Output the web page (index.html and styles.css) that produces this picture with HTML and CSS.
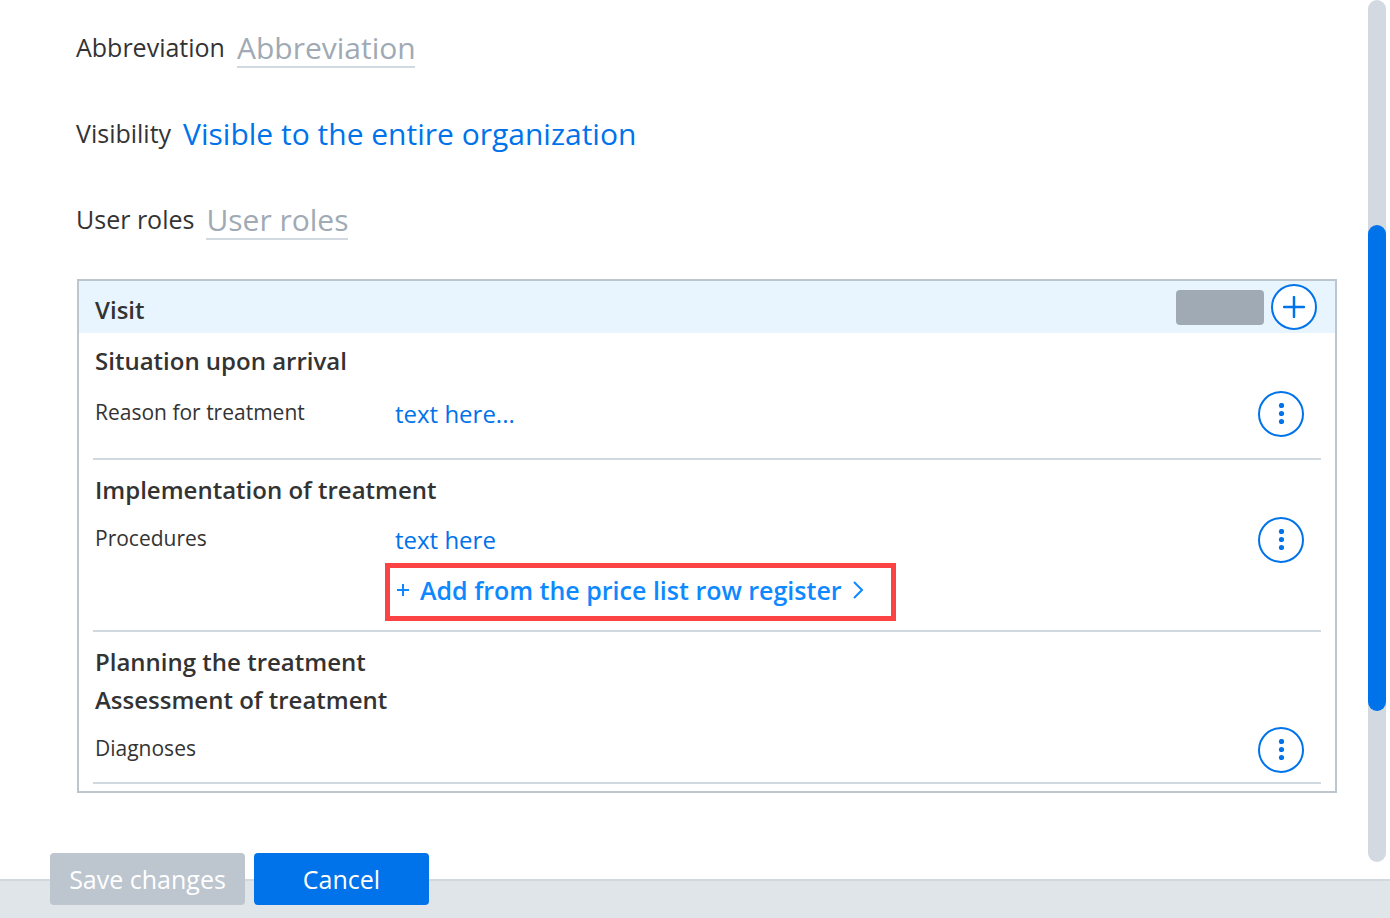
FILE: index.html
```
<!DOCTYPE html>
<html lang="en">
<head>
  <meta charset="UTF-8">
  <title>Visit template</title>
  <link rel="stylesheet" href="styles.css">
</head>
<body>

  <div class="main">
    <form class="content" id="templateForm">
      <div class="field">
        <label for="abbreviation">Abbreviation</label>
        <input type="text" id="abbreviation" class="field-input" placeholder="Abbreviation">
      </div>
      <div class="field">
        <label for="visibility">Visibility</label>
        <button type="button" id="visibility" class="field-value">Visible to the entire organization</button>
      </div>
      <div class="field">
        <label for="userRoles">User roles</label>
        <input type="text" id="userRoles" class="field-input short" placeholder="User roles">
      </div>

      <div class="card">
        <div class="card-header">
          <h2>Visit</h2>
          <div class="tag"></div>
          <button type="button" class="round" aria-label="Add">
            <svg width="22" height="22" viewBox="0 0 22 22"><path d="M11 1v20M1 11h20"/></svg>
          </button>
        </div>

        <div class="section tall">
          <h3>Situation upon arrival</h3>
          <div class="row">
            <span class="row-label">Reason for treatment</span>
            <button type="button" class="row-value">text here...</button>
            <button type="button" class="round" aria-label="More">
              <svg width="6" height="22" viewBox="0 0 6 22"><circle cx="3.5" cy="2.5" r="2.6"/><circle cx="3.5" cy="10.5" r="2.6"/><circle cx="3.5" cy="18.5" r="2.6"/></svg>
            </button>
          </div>
        </div>

        <div class="section">
          <h3>Implementation of treatment</h3>
          <div class="row">
            <span class="row-label">Procedures</span>
            <button type="button" class="row-value">text here</button>
            <button type="button" class="round" aria-label="More">
              <svg width="6" height="22" viewBox="0 0 6 22"><circle cx="3.5" cy="2.5" r="2.6"/><circle cx="3.5" cy="10.5" r="2.6"/><circle cx="3.5" cy="18.5" r="2.6"/></svg>
            </button>
          </div>
          <div class="highlight">
            <a href="#" class="add-link">
              <svg width="14" height="14" viewBox="0 0 14 14"><path d="M7 1v12M1 7h12"/></svg>
              <span>Add from the price list row register</span>
              <svg width="12" height="20" viewBox="0 0 12 20"><path d="M2 2l8 8-8 8"/></svg>
            </a>
          </div>
        </div>

        <div class="section">
          <h3>Planning the treatment</h3>
          <h3>Assessment of treatment</h3>
          <div class="row">
            <span class="row-label">Diagnoses</span>
            <span></span>
            <button type="button" class="round" aria-label="More">
              <svg width="6" height="22" viewBox="0 0 6 22"><circle cx="3.5" cy="2.5" r="2.6"/><circle cx="3.5" cy="10.5" r="2.6"/><circle cx="3.5" cy="18.5" r="2.6"/></svg>
            </button>
          </div>
        </div>
      </div>
    </form>

    <div class="scroll-track">
      <div class="scroll-thumb"></div>
    </div>
  </div>

  <div class="footer">
    <button type="submit" form="templateForm" class="btn btn-save" disabled>Save changes</button>
    <button type="button" class="btn btn-cancel">Cancel</button>
  </div>

</body>
</html>
```
FILE: styles.css
```
* {
  box-sizing: border-box;
}

body {
  margin: 0;
  min-height: 100vh;
  display: flex;
  flex-direction: column;
  font-family: "Open Sans", "Noto Sans", sans-serif;
  font-size: 25px;
  color: #333;
  background: #fff;
}

button, input {
  font-family: inherit;
  padding: 0;
  border: none;
  background: none;
}

h2, h3 {
  margin: 0;
  font-size: 24px;
  font-weight: 600;
  line-height: 38px;
}

.main {
  flex: 1;
  display: flex;
}

.content {
  flex: 1;
  padding: 28px 31px 0 76px;
}

.field {
  display: flex;
  gap: 12px;
  height: 40px;
  margin-bottom: 46px;
}

.field label {
  line-height: 38px;
}

.field-input {
  width: 178px;
  font-size: 30px;
  border-bottom: 2px solid #d2d9e0;
}

.field-input.short {
  width: 142px;
}

.field-input::placeholder {
  color: #a0aab4;
  opacity: 1;
}

.field-value {
  font-size: 30px;
  line-height: 40px;
  color: #0073eb;
}

.field:nth-child(3) {
  margin-bottom: 39px;
}

.card {
  border: 2px solid #bdc5cf;
  padding-bottom: 7px;
  margin: 0 0 86px 1px;
}

.card-header {
  display: flex;
  align-items: center;
  height: 52px;
  padding: 0 18px 0 16px;
  background: #e8f5ff;
}

.card-header h2 {
  flex: 1;
  padding-top: 6px;
}

.tag {
  width: 88px;
  height: 35px;
  margin-right: 7px;
  border-radius: 4px;
  background: #a0aab4;
}

.round {
  display: flex;
  align-items: center;
  justify-content: center;
  width: 46px;
  height: 46px;
  border: 2px solid #0073eb;
  border-radius: 50%;
  background: #fff;
  fill: #0073eb;
}

.round path {
  stroke: #0073eb;
  stroke-width: 2.5;
  stroke-linecap: round;
}

.section {
  margin: 0 14px;
  padding: 11px 0 9px 2px;
  border-bottom: 2px solid #d2d9de;
}

.section.tall {
  padding: 9px 0 21px 2px;
}

.row {
  display: grid;
  grid-template-columns: 300px 1fr 46px;
  margin-top: 8px;
  padding-right: 17px;
}

.tall .row {
  margin-top: 11px;
}

.row-label {
  font-size: 21px;
  line-height: 42px;
}

.row-value {
  justify-self: start;
  font-size: 24px;
  line-height: 46px;
  color: #0073eb;
}

.highlight {
  width: 511px;
  margin-left: 290px;
  padding: 0 6px 4px;
  border: 5px solid #fc4343;
}

.add-link {
  display: flex;
  align-items: center;
  gap: 10px;
  font-weight: 600;
  line-height: 44px;
  color: #0d88ff;
  text-decoration: none;
}

.add-link path {
  fill: none;
  stroke: #0d88ff;
  stroke-width: 2;
}

.scroll-track {
  width: 18px;
  margin: 0 4px 17px 0;
  border-radius: 9px;
  background: #d2d9e0;
}

.scroll-thumb {
  height: 486px;
  margin-top: 225px;
  border-radius: 9px;
  background: #0073eb;
}

.footer {
  display: flex;
  gap: 9px;
  padding: 0 50px 13px;
  border-top: 2px solid #d2d9de;
  background: #e0e5e9;
}

.btn {
  width: 175px;
  height: 52px;
  margin-top: -28px;
  border-radius: 4px;
  font-size: 25px;
  color: #fff;
}

.btn-save {
  width: 195px;
  background: #bdc5cf;
}

.btn-cancel {
  background: #0073eb;
}
```
